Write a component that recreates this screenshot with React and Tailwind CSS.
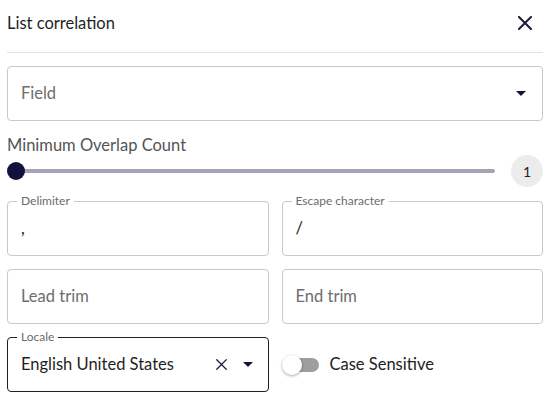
import React from "react";

const font = { fontFamily: "Lato, 'Open Sans', sans-serif" };

const CloseIcon = ({ size = 14, stroke = 2 }) => (
  <svg width={size} height={size} viewBox="0 0 14 14" fill="none">
    <path d="M1 1L13 13M13 1L1 13" stroke="#1c1c3e" strokeWidth={stroke} strokeLinecap="square" />
  </svg>
);

const Caret = () => (
  <svg width="10" height="5" viewBox="0 0 10 5">
    <path d="M0 0H10L5 5Z" fill="#14143a" />
  </svg>
);

const TextBox = ({ label, value, placeholder }) => (
  <div className="relative h-[55px] rounded-[4px] border border-[#c8c8c8] flex items-center px-[13px]">
    {label && (
      <span className="absolute -top-[8px] left-[9px] bg-white px-[4px] text-[12px] leading-[14px] text-[#6b6b6b]">
        {label}
      </span>
    )}
    {value ? (
      <span className="text-[16.5px] text-[#222]">{value}</span>
    ) : (
      <span className="text-[16.5px] text-[#6e6e6e]">{placeholder}</span>
    )}
  </div>
);

export default function App() {
  return (
    <div className="w-[551px] h-[401px] bg-white pl-[7px] pr-[8px]" style={font}>
      <div className="h-[46px] flex items-center justify-between pr-[11px]">
        <span className="text-[16.5px] text-[#1f1f1f]">List correlation</span>
        <CloseIcon size={14} />
      </div>
      <div className="mt-[6px] h-px bg-[#e2e2e2]" />

      <div className="mt-[13px] h-[55px] rounded-[4px] border border-[#c8c8c8] flex items-center justify-between pl-[13px] pr-[16px]">
        <span className="text-[16.5px] text-[#6e6e6e]">Field</span>
        <Caret />
      </div>

      <div className="mt-[14px] text-[16.5px] leading-[20px] text-[#555]">Minimum Overlap Count</div>
      <div className="h-[32px] flex items-center">
        <div className="relative flex-1 h-[4px] ml-[9px] mr-[16px] rounded-full bg-[#a4a4b6]">
          <div className="absolute -left-[9px] -top-[7px] w-[18px] h-[18px] rounded-full bg-[#12123f]" />
        </div>
        <div className="w-[32px] h-[32px] rounded-full bg-[#ececec] flex items-center justify-center text-[14px] text-[#222]">
          1
        </div>
      </div>

      <div className="mt-[14px] grid grid-cols-2 gap-x-[13px] gap-y-[13px]">
        <TextBox label="Delimiter" value="," />
        <TextBox label="Escape character" value="/" />
        <TextBox placeholder="Lead trim" />
        <TextBox placeholder="End trim" />
        <div className="relative h-[55px] rounded-[4px] border border-[#1f1f1f] flex items-center pl-[13px] pr-[15px]">
          <span className="absolute -top-[8px] left-[9px] bg-white px-[4px] text-[12px] leading-[14px] text-[#6b6b6b]">
            Locale
          </span>
          <span className="flex-1 text-[16.5px] text-[#1f1f1f]">English United States</span>
          <CloseIcon size={11} stroke={1.6} />
          <span className="ml-[16px] flex">
            <Caret />
          </span>
        </div>
        <div className="flex items-center gap-[11px] pl-[1px]">
          <div className="relative w-[34px] h-[14px] rounded-full bg-[#9e9e9e] ml-[2px]">
            <div className="absolute -left-[3px] -top-[3px] w-[20px] h-[20px] rounded-full bg-white shadow-[0_1px_3px_rgba(0,0,0,0.35)]" />
          </div>
          <span className="text-[16.5px] text-[#222]">Case Sensitive</span>
        </div>
      </div>
    </div>
  );
}
